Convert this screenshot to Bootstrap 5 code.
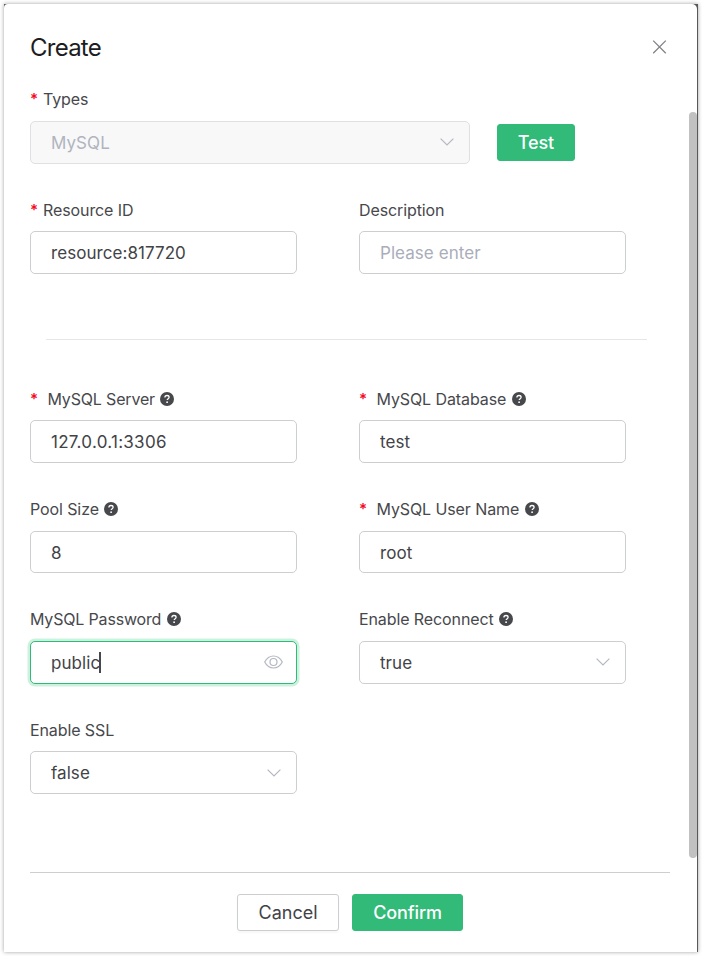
<!DOCTYPE html>
<html lang="en">
<head>
<meta charset="utf-8">
<meta name="viewport" content="width=device-width, initial-scale=1">
<title>Create</title>
<link href="https://cdn.jsdelivr.net/npm/bootstrap@5.3.0/dist/css/bootstrap.min.css" rel="stylesheet">
<style>
  body { font-family: Inter, "Noto Sans", sans-serif; color: #47484c; background: #fff; height: 956px; overflow: hidden; }
  .dialog-shell { width: 694px; height: 948px; margin: 4px 0 0 4px; background: #595959; box-shadow: 0 0 4px rgba(0,0,0,.38); }
  .dialog-panel { width: 693px; height: 948px; padding-left: 26px; border-radius: 4px 5px 0 0; }
  .dialog-head { width: 640px; height: 84.6px; }
  .dialog-title { font-size: 24px; line-height: 30px; letter-spacing: -.75px; font-weight: 400; color: #1d1d1f; padding-top: 28.5px; }
  .close-icon { width: 15px; height: 15px; margin: 35px 3px 0 0; }
  .dialog-body { height: 783.4px; }
  .fields-grid { display: grid; grid-template-columns: 267px 267px; column-gap: 62px; grid-auto-rows: 110.3px; }
  .types-row { height: 110.3px; column-gap: 27px; }
  .types-field { width: 440px; }
  .form-label { font-size: 16px; line-height: 22px; height: 22px; margin: 0 0 10.2px; letter-spacing: -.1px; white-space: pre; }
  .label-up { margin-top: -.6px; margin-bottom: 10.8px; }
  .req { color: #f5071e; width: 13px; flex: none; font-size: 15px; font-weight: 600; line-height: 24px; }
  .req-wide { width: 17.5px; }
  .help-icon { width: 14px; height: 14px; margin-left: 5.5px; }
  .tight { letter-spacing: -.17px; }
  .field-box { height: 42.7px; padding: 0 20px; border: 1px solid #cdced0; border-radius: 5px; background: #fff; }
  .field-box input { font-size: 17px; line-height: 24px; letter-spacing: .06px; color: #424347; padding: .7px 0 0; height: 24.7px; }
  .field-box .row-low { padding-top: 1.5px; height: 25.5px; }
  .field-box input::placeholder { color: #a9adbb; opacity: 1; }
  .field-box.is-disabled { height: 43px; background: #f8f8f8; border-color: #dfe0e2; }
  .field-box.is-disabled input { color: #b0b4c0; }
  .field-box.is-focus { border-color: #2fba77; box-shadow: 0 0 0 2.5px #cdf1df; }
  .field-box .ip-value { letter-spacing: .28px; }
  .chevron { width: 14px; height: 8px; flex: none; margin-right: -5px; }
  .eye { width: 19px; height: 14px; flex: none; margin: 0 -7px 1px 0; }
  .caret { left: 48px; top: 2px; width: 2px; height: 21px; background: #47484c; }
  .btn { font-size: 18px; line-height: 24px; height: 37px; padding: 6px 19px 5px; border-radius: 3px; }
  .btn-green { font-weight: 500; letter-spacing: -.12px; --bs-btn-bg: #31ba78; --bs-btn-border-color: #31ba78; --bs-btn-color: #fff; --bs-btn-hover-bg: #2aa96c; --bs-btn-hover-color: #fff; }
  .btn-plain { --bs-btn-bg: #fff; --bs-btn-border-color: #cdced0; --bs-btn-color: #424347; box-shadow: 0 2px 2px rgba(0,0,0,.035); }
  .btn-test { width: 78px; margin-top: 35.4px; }
  .section-rule { width: 601px; margin: 29.9px 0 48.1px 16px; border-top: 1px solid #e6e6e7; }
  .main-column { width: 659px; }
  .scroll-thumb { width: 8px; height: 746px; margin-top: 23.4px; border-radius: 4px; background: #c1c1c1; }
  .dialog-foot { width: 640px; height: 80px; border-top: 1px solid #cecece; padding-top: 21px; gap: 13px; }
  .btn-cancel { width: 102px; } .btn-confirm { width: 111px; }
</style>
</head>
<body>
<svg class="d-none" xmlns="http://www.w3.org/2000/svg">
  <symbol id="help" viewBox="0 0 14 14"><circle cx="7" cy="7" r="7" fill="#47484c"/><path d="M4.9 5.5C4.9 4.3 5.8 3.5 7 3.5s2.1.7 2.1 1.8c0 1.4-1.9 1.4-1.9 2.8" fill="none" stroke="#fff" stroke-width="1.3"/><circle cx="7.1" cy="10.2" r=".9" fill="#fff"/></symbol>
  <symbol id="chev" viewBox="0 0 14 8"><path d="M.6.6 7 7 13.4.6" fill="none" stroke="#b4b8c3" stroke-width="1.2"/></symbol>
</svg>
<div class="dialog-shell">
  <div class="dialog-panel bg-white d-flex flex-column" role="dialog" aria-label="Create">
    <div class="dialog-head d-flex justify-content-between align-items-start">
      <h1 class="dialog-title m-0">Create</h1>
      <svg class="close-icon" viewBox="0 0 15 15"><path d="M1.2 1.6 13.8 14.2M13.8 1.6 1.2 14.2" stroke="#818388" stroke-width="1.3" fill="none"/></svg>
    </div>
    <div class="dialog-body d-flex">
      <form class="main-column">
        <div class="types-row d-flex align-items-start">
          <div class="types-field">
            <label class="form-label label-up d-flex align-items-center"><span class="req">*</span>Types</label>
            <div class="field-box is-disabled d-flex align-items-center"><input class="form-control border-0 bg-transparent shadow-none" value="MySQL" disabled><svg class="chevron"><use href="#chev"/></svg></div>
          </div>
          <button type="button" class="btn btn-green btn-test">Test</button>
        </div>
        <div class="fields-grid">
          <div>
            <label class="form-label d-flex align-items-center"><span class="req">*</span>Resource ID</label>
            <div class="field-box d-flex align-items-center"><input class="form-control border-0 bg-transparent shadow-none" value="resource:817720"></div>
          </div>
          <div>
            <label class="form-label d-flex align-items-center">Description</label>
            <div class="field-box d-flex align-items-center"><input class="form-control border-0 bg-transparent shadow-none" placeholder="Please enter"></div>
          </div>
        </div>
        <div class="section-rule"></div>
        <div class="fields-grid">
          <div>
            <label class="form-label tight d-flex align-items-center"><span class="req req-wide">*</span>MySQL Server<svg class="help-icon"><use href="#help"/></svg></label>
            <div class="field-box d-flex align-items-center"><input class="form-control border-0 bg-transparent shadow-none ip-value" value="127.0.0.1:3306"></div>
          </div>
          <div>
            <label class="form-label d-flex align-items-center"><span class="req req-wide">*</span>MySQL Database<svg class="help-icon"><use href="#help"/></svg></label>
            <div class="field-box d-flex align-items-center"><input class="form-control border-0 bg-transparent shadow-none" value="test"></div>
          </div>
          <div>
            <label class="form-label d-flex align-items-center">Pool Size<svg class="help-icon"><use href="#help"/></svg></label>
            <div class="field-box d-flex align-items-center"><input class="form-control border-0 bg-transparent shadow-none row-low" value="8"></div>
          </div>
          <div>
            <label class="form-label d-flex align-items-center"><span class="req req-wide">*</span>MySQL User Name<svg class="help-icon"><use href="#help"/></svg></label>
            <div class="field-box d-flex align-items-center"><input class="form-control border-0 bg-transparent shadow-none row-low" value="root"></div>
          </div>
          <div>
            <label class="form-label label-up tight d-flex align-items-center">MySQL Password<svg class="help-icon"><use href="#help"/></svg></label>
            <div class="field-box is-focus d-flex align-items-center">
              <div class="position-relative flex-grow-1 d-flex"><input class="form-control border-0 bg-transparent shadow-none" value="public"><span class="caret position-absolute"></span></div>
              <svg class="eye" viewBox="0 0 19 14"><path d="M.7 7C2.8 3 5.7 1 9.5 1s6.7 2 8.8 6c-2.1 4-5 6-8.8 6S2.8 11 .7 7Z" fill="none" stroke="#b4b8c3" stroke-width="1.2"/><circle cx="9.5" cy="7" r="3.5" fill="none" stroke="#b4b8c3" stroke-width="1.2"/></svg>
            </div>
          </div>
          <div>
            <label class="form-label label-up d-flex align-items-center">Enable Reconnect<svg class="help-icon"><use href="#help"/></svg></label>
            <div class="field-box d-flex align-items-center"><input class="form-control border-0 bg-transparent shadow-none" value="true" readonly><svg class="chevron"><use href="#chev"/></svg></div>
          </div>
          <div>
            <label class="form-label d-flex align-items-center">Enable SSL</label>
            <div class="field-box d-flex align-items-center"><input class="form-control border-0 bg-transparent shadow-none" value="false" readonly><svg class="chevron"><use href="#chev"/></svg></div>
          </div>
        </div>
      </form>
      <div class="scroll-thumb"></div>
    </div>
    <div class="dialog-foot d-flex justify-content-center align-items-start">
      <button type="button" class="btn btn-plain btn-cancel">Cancel</button>
      <button type="button" class="btn btn-green btn-confirm">Confirm</button>
    </div>
  </div>
</div>
<script src="https://cdn.jsdelivr.net/npm/bootstrap@5.3.0/dist/js/bootstrap.bundle.min.js"></script>
</body>
</html>
